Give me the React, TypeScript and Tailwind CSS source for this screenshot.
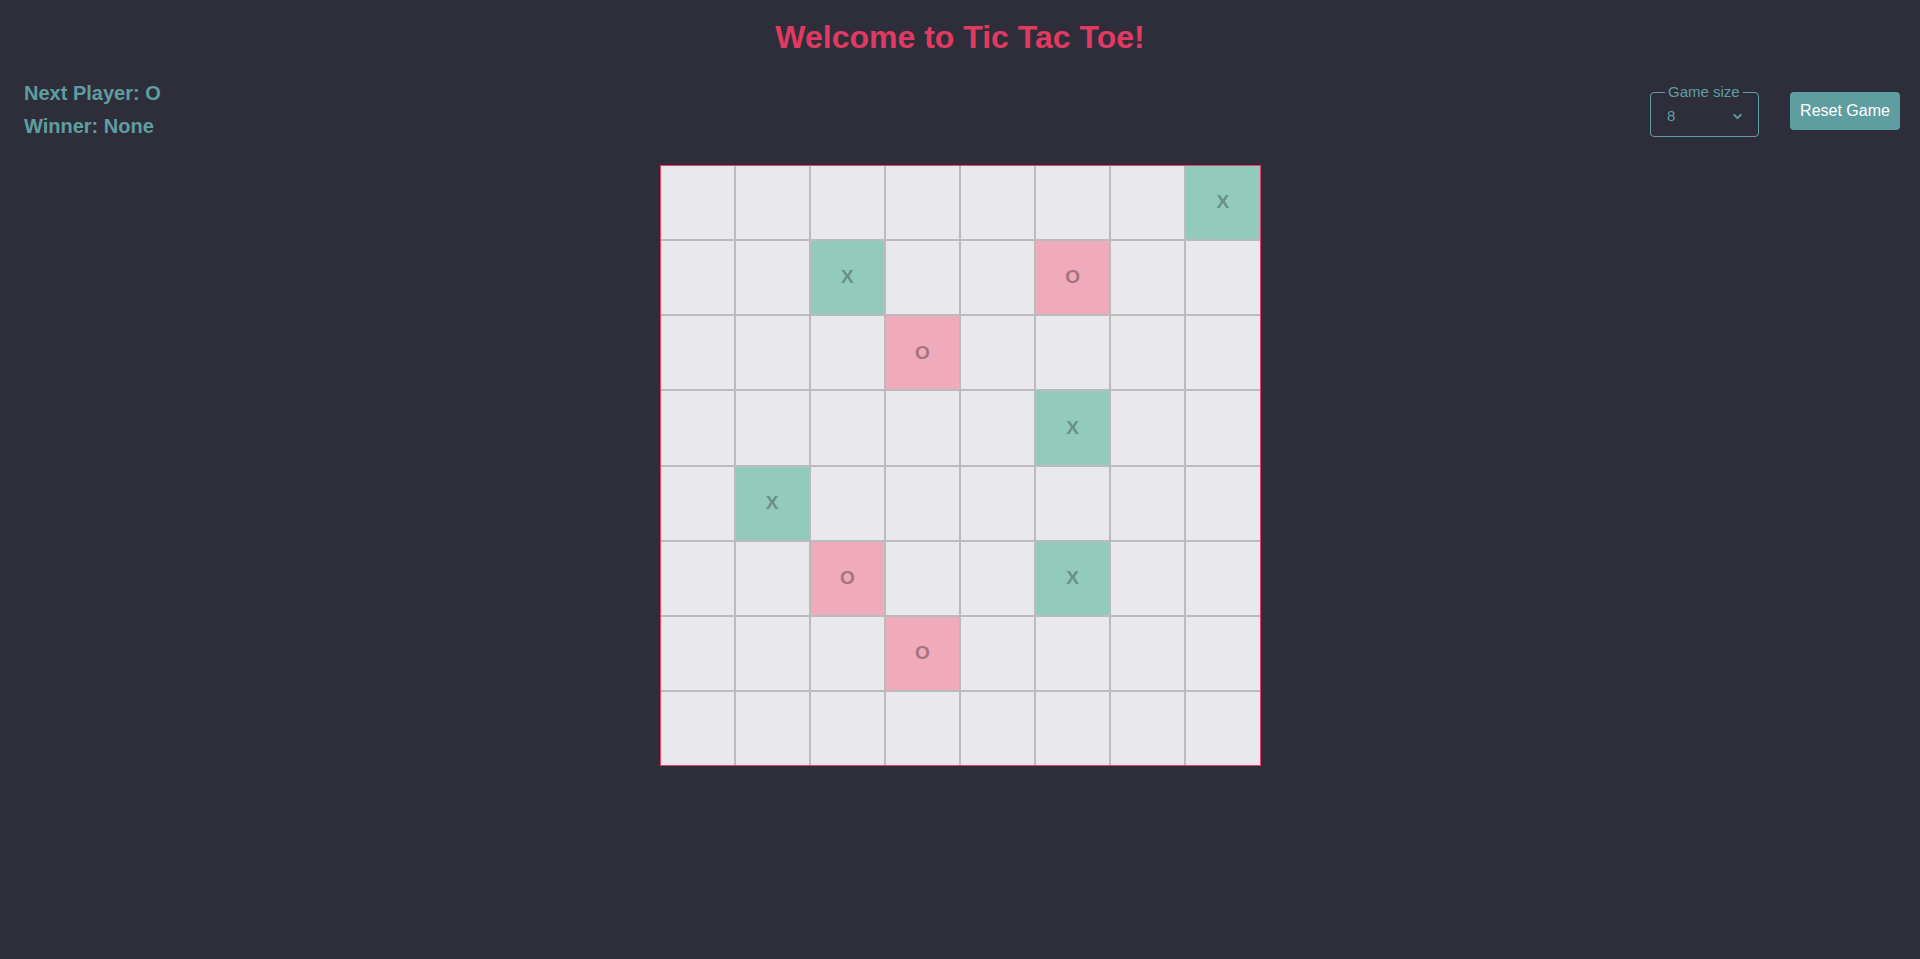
import { ChevronDownIcon } from 'lucide-react'

type Mark = 'X' | 'O' | null

const SIZE = 8

// board state as seen in the screenshot
const MOVES: Record<string, Mark> = {
  '0-7': 'X',
  '1-2': 'X',
  '1-5': 'O',
  '2-3': 'O',
  '3-5': 'X',
  '4-1': 'X',
  '5-2': 'O',
  '5-5': 'X',
  '6-3': 'O',
}

const CELL_STYLES: Record<'X' | 'O' | 'empty', string> = {
  X: 'bg-[#92cbbb] text-[#6a9187]',
  O: 'bg-[#efaabb] text-[#a6737f]',
  empty: 'bg-[#e9e8ed]',
}

function Cell({ value }: { value: Mark }) {
  const cls = CELL_STYLES[value ?? 'empty']
  return (
    <div className={`flex items-center justify-center text-[19px] font-bold ${cls}`}>
      {value}
    </div>
  )
}

function Board() {
  const cells: Mark[] = []
  for (let r = 0; r < SIZE; r++) {
    for (let c = 0; c < SIZE; c++) {
      cells.push(MOVES[`${r}-${c}`] ?? null)
    }
  }

  return (
    <div className="mx-auto mt-[27px] grid h-[601px] w-[601px] grid-cols-8 grid-rows-8 gap-[2px] border border-[#e8406c] bg-[#bbbbbb]">
      {cells.map((v, i) => (
        <Cell key={i} value={v} />
      ))}
    </div>
  )
}

function GameSizeSelect() {
  return (
    <div className="relative mt-[10px] flex h-[45px] w-[109px] items-center justify-between rounded-[4px] border border-[#5f9ea0] pl-[16px] pr-[14px] text-[#5f9ea0]">
      <span className="absolute -top-[10px] left-[14px] bg-[#2e2e3a] px-[3px] text-[15px] leading-[17px]">
        Game size
      </span>
      <span className="pt-[3px] text-[15px]">8</span>
      <ChevronDownIcon className="mt-[3px] h-[13px] w-[13px]" strokeWidth={3.5} />
    </div>
  )
}

export default function App() {
  return (
    <div className="min-h-screen bg-[#2e2e3a] font-['Liberation_Sans',Arial,sans-serif]">
      <h1 className="pt-[19px] text-center text-[32px] leading-[37px] font-bold text-[#e03a62]">
        Welcome to Tic Tac Toe!
      </h1>

      <div className="mt-[26px] flex items-start justify-between pl-6 pr-5">
        <div className="flex flex-col gap-[10px] text-[20px] leading-[23px] font-bold text-[#5f9ea0]">
          <div>Next Player: O</div>
          <div>Winner: None</div>
        </div>
        <div className="flex items-start gap-[31px]">
          <GameSizeSelect />
          <button className="mt-[10px] h-[38px] w-[110px] rounded-[4px] bg-[#5f9ea0] text-[16px] text-white">
            Reset Game
          </button>
        </div>
      </div>

      <Board />
    </div>
  )
}
